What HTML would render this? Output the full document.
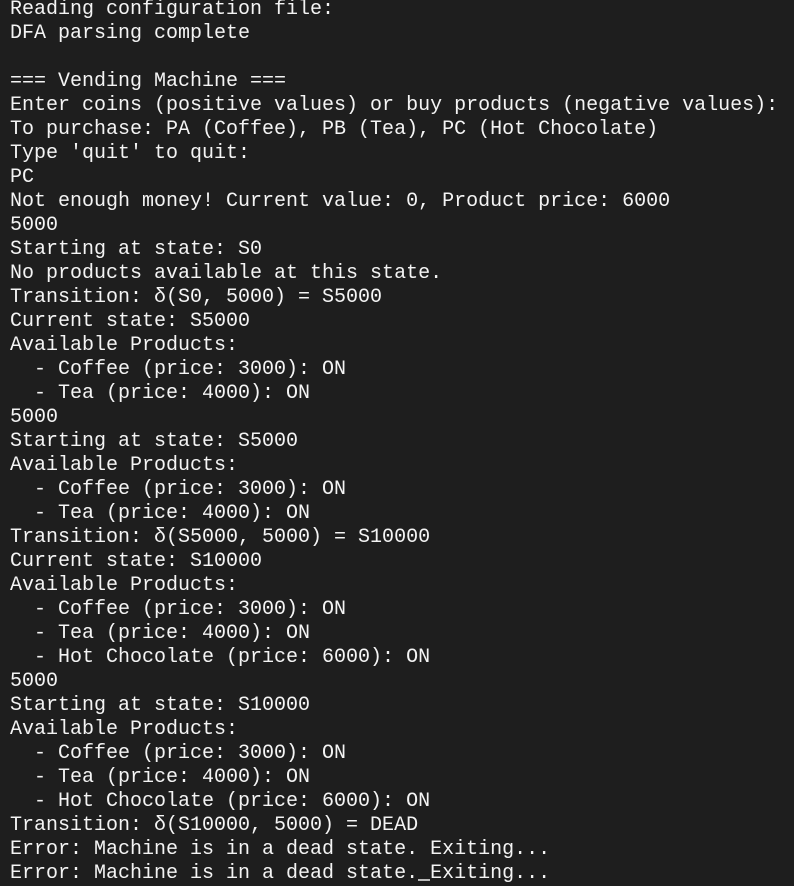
<!DOCTYPE html>
<html><head><meta charset="utf-8"><style>
html,body{margin:0;padding:0;background:#1e1e1e;width:794px;height:884px;overflow:hidden}
pre{margin:0;position:absolute;left:10px;top:-2px;font-family:"Liberation Mono","DejaVu Sans Mono",monospace;font-size:20px;line-height:24px;color:#f4f4f4;letter-spacing:0}
.cur{display:inline-block;width:12px;height:2px;background:#bbb;vertical-align:baseline;margin-bottom:-3px}
</style></head><body><pre>Reading configuration file:
DFA parsing complete

=== Vending Machine ===
Enter coins (positive values) or buy products (negative values):
To purchase: PA (Coffee), PB (Tea), PC (Hot Chocolate)
Type 'quit' to quit:
PC
Not enough money! Current value: 0, Product price: 6000
5000
Starting at state: S0
No products available at this state.
Transition: δ(S0, 5000) = S5000
Current state: S5000
Available Products:
  - Coffee (price: 3000): ON
  - Tea (price: 4000): ON
5000
Starting at state: S5000
Available Products:
  - Coffee (price: 3000): ON
  - Tea (price: 4000): ON
Transition: δ(S5000, 5000) = S10000
Current state: S10000
Available Products:
  - Coffee (price: 3000): ON
  - Tea (price: 4000): ON
  - Hot Chocolate (price: 6000): ON
5000
Starting at state: S10000
Available Products:
  - Coffee (price: 3000): ON
  - Tea (price: 4000): ON
  - Hot Chocolate (price: 6000): ON
Transition: δ(S10000, 5000) = DEAD
Error: Machine is in a dead state. Exiting...
Error: Machine is in a dead state.<span class="cur"></span>Exiting...</pre></body></html>
